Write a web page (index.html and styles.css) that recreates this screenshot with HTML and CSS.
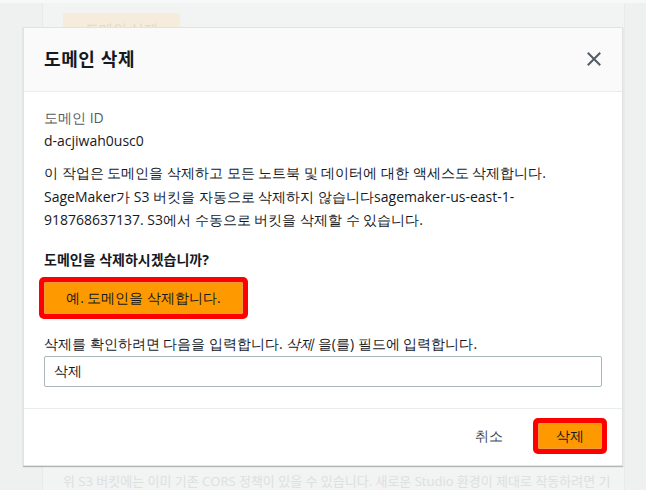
FILE: index.html
```html
<!DOCTYPE html>
<html lang="ko">
<head>
<meta charset="utf-8">
<title>도메인 삭제</title>
<link rel="stylesheet" href="styles.css">
</head>
<body>
<div class="page">
  <div class="gutter gutter-left"></div>
  <main class="panel">
    <div class="ghost-btn">도메인 삭제</div>
    <p class="ghost-text">위 S3 버킷에는 이미 기존 CORS 정책이 있을 수 있습니다. 새로운 Studio 환경이 제대로 작동하려면 기</p>
  </main>
  <div class="gutter gutter-right"></div>
</div>

<div class="modal" role="dialog" aria-labelledby="modal-title">
  <header class="modal-header">
    <h2 id="modal-title" class="modal-title">도메인 삭제</h2>
    <button class="close-btn" aria-label="닫기">
      <svg width="14" height="14" viewBox="0 0 14 14"><path d="M1.5 1.5 L12.5 12.5 M12.5 1.5 L1.5 12.5" stroke="#545b64" stroke-width="2" fill="none" stroke-linecap="square"/></svg>
    </button>
  </header>
  <section class="modal-body">
    <div class="field-label">도메인 ID</div>
    <div class="field-value">d-acjiwah0usc0</div>
    <p class="desc">이 작업은 도메인을 삭제하고 모든 노트북 및 데이터에 대한 액세스도 삭제합니다. SageMaker가 S3 버킷을 자동으로 삭제하지 않습니다sagemaker-us-east-1-<wbr>918768637137. S3에서 수동으로 버킷을 삭제할 수 있습니다.</p>
    <div class="question">도메인을 삭제하시겠습니까?</div>
    <div class="hl hl-block">
      <button class="btn-primary btn-wide">예. 도메인을 삭제합니다.</button>
    </div>
    <label class="confirm-label" for="confirm">삭제를 확인하려면 다음을 입력합니다. <em>삭제</em> 을(를) 필드에 입력합니다.</label>
    <input id="confirm" class="confirm-input" type="text" value="삭제">
  </section>
  <footer class="modal-footer">
    <button class="btn-link">취소</button>
    <div class="hl hl-footer">
      <button class="btn-primary btn-small">삭제</button>
    </div>
  </footer>
</div>
</body>
</html>
```
FILE: styles.css
```css
* { box-sizing: border-box; }
html, body {
  margin: 0;
  padding: 0;
  height: 490px;
  overflow: hidden;
}
body {
  font-family: "Open Sans", sans-serif;
  font-size: 14px;
  color: #16191f;
  background: #eff1f1;
  position: relative;
}
.page {
  display: flex;
  height: 490px;
  border-top: 3px solid #f7f8f8;
}
.gutter-left {
  width: 43px;
  flex: none;
  background: #eff1f1;
  border-right: 1px solid #e8eaea;
}
.gutter-right {
  width: 22px;
  flex: none;
  background: #eff1f1;
  border-left: 1px solid #e8eaea;
}
.panel {
  flex: 1;
  min-width: 0;
  display: flex;
  flex-direction: column;
  background: #f2f3f3;
  padding-left: 20px;
}
.ghost-btn {
  width: 117px;
  height: 32px;
  margin-top: 10px;
  background: #f5ecdc;
  color: #e4d7c3;
  display: flex;
  align-items: center;
  justify-content: center;
  border-radius: 2px;
}
.ghost-text {
  margin: auto 0 -2px 0;
  font-family: "Open Sans", "Noto Sans CJK KR", sans-serif;
  font-size: 13px;
  line-height: 22px;
  white-space: nowrap;
  overflow: hidden;
  color: #dde0e0;
}

.modal {
  position: absolute;
  left: 23px;
  top: 27px;
  width: 600px;
  background: #fff;
  border: 1px solid #dfe3e3;
  box-shadow: 0 1px 1px rgba(0, 0, 0, 0.25);
}
.modal-header {
  height: 64px;
  display: flex;
  align-items: center;
  justify-content: space-between;
  padding: 0 21px 2px 20px;
  background: #fafafa;
  border-bottom: 1px solid #eaeded;
}
.modal-title {
  margin: 0;
  font-family: "Open Sans", "Noto Sans CJK KR", sans-serif;
  font-size: 18px;
  font-weight: 700;
  letter-spacing: 0.6px;
  line-height: 24px;
  color: #16191f;
}
.close-btn {
  border: 0;
  background: none;
  padding: 0;
  display: flex;
  cursor: pointer;
}
.modal-body {
  padding: 14px 20px 21px 20px;
  display: flex;
  flex-direction: column;
  line-height: 23px;
}
.field-label {
  color: #545b64;
}
.field-value {
  color: #16191f;
}
.desc {
  margin: 9px 0 0 0;
  line-height: 23.5px;
}
.question {
  margin-top: 16px;
  font-family: "Open Sans", "Noto Sans CJK KR", sans-serif;
  font-weight: 700;
}
.hl {
  display: flex;
  width: fit-content;
  padding: 5px;
  background: #ff0000;
  border-radius: 5px;
}
.hl-block {
  margin: 6px 0 -5px -5px;
}
.btn-primary {
  font-family: inherit;
  font-size: 14px;
  color: #16191f;
  background: #ff9900;
  border: 1px solid #f39a3a;
  border-radius: 1px;
  cursor: pointer;
}
.btn-wide {
  width: 199px;
  height: 32px;
  padding: 0;
}
.confirm-label {
  margin-top: 18px;
  color: #16191f;
}
.confirm-label em {
  font-style: italic;
}
.confirm-input {
  margin-top: 1px;
  height: 31px;
  width: 100%;
  border: 1px solid #aab7b8;
  border-radius: 2px;
  padding: 0 9px;
  font-family: inherit;
  font-size: 14px;
  color: #16191f;
  outline: none;
}
.modal-footer {
  height: 57px;
  border-top: 1px solid #eaeded;
  display: flex;
  justify-content: flex-end;
  align-items: center;
  padding: 0 20px 1px 20px;
}
.btn-link {
  font-family: inherit;
  font-size: 14px;
  color: #444b54;
  background: none;
  border: 0;
  padding: 0;
  margin-right: 35px;
  cursor: pointer;
}
.hl-footer {
  margin: 0 -5px 0 -5px;
}
.btn-small {
  width: 64px;
  height: 26px;
  padding: 0;
}
```
